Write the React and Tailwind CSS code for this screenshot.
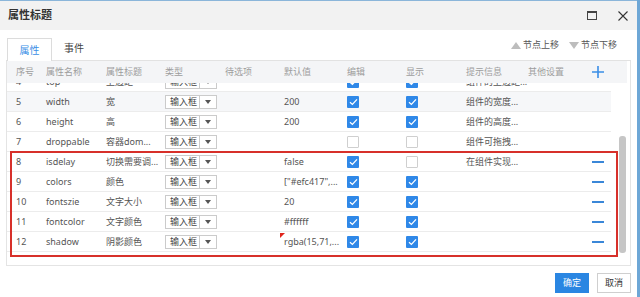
import React from 'react';

const FONT = { fontFamily: '"Noto Sans", "Noto Sans CJK SC", sans-serif' };

const COLS = 'grid grid-cols-[30px_60px_59px_60px_59px_63px_59px_60px_62px_64px_1fr] pl-[1px]';

const ROWS = [
  { no: 4, name: 'top', title: '上边距', def: '', edit: true, show: true, hint: '组件的上边距...' },
  { no: 5, name: 'width', title: '宽', def: '200', edit: true, show: true, hint: '组件的宽度...', shade: true },
  { no: 6, name: 'height', title: '高', def: '200', edit: true, show: true, hint: '组件的高度...' },
  { no: 7, name: 'droppable', title: '容器dom...', def: '', edit: false, show: false, hint: '组件可拖拽...' },
  { no: 8, name: 'isdelay', title: '切换需要调...', def: 'false', edit: true, show: false, hint: '在组件实现...', minus: true },
  { no: 9, name: 'colors', title: '颜色', def: '["#efc417",...', edit: true, show: true, hint: '', minus: true },
  { no: 10, name: 'fontszie', title: '文字大小', def: '20', edit: true, show: true, hint: '', minus: true },
  { no: 11, name: 'fontcolor', title: '文字颜色', def: '#ffffff', edit: true, show: true, hint: '', minus: true },
  { no: 12, name: 'shadow', title: '阴影颜色', def: 'rgba(15,71,...', edit: true, show: true, hint: '', minus: true, mark: true },
];

const Check = ({ on }) =>
  on ? (
    <span className="w-[12px] h-[12px] bg-[#2f88e8] rounded-[1px] flex items-center justify-center">
      <svg width="9" height="8" viewBox="0 0 9 8">
        <path d="M1 4.2 L3.4 6.4 L8 1.4" fill="none" stroke="#fff" strokeWidth="1.3" />
      </svg>
    </span>
  ) : (
    <span className="block w-[12px] h-[12px] bg-white border border-[#cfcfcf] rounded-[1px]" />
  );

const Select = () => (
  <div className="w-[52px] h-[14px] border border-[#cbcbcb] bg-white flex items-center text-[9px] text-[#444]">
    <span className="w-[33px] pl-[4px] leading-none">输入框</span>
    <span className="flex-1 h-full border-l border-[#cbcbcb] flex items-center justify-center">
      <svg width="6" height="4" viewBox="0 0 6 4">
        <path d="M0 0 H6 L3 4 Z" fill="#555" />
      </svg>
    </span>
  </div>
);

const Row = ({ r }) => (
  <div className={`${COLS} h-[20px] items-center border-b border-[#ececec] text-[9px] text-[#555] ${r.shade ? 'bg-[#f6f7f9]' : ''}`}>
    <span className="pl-2">{r.no}</span>
    <span className="pl-2">{r.name}</span>
    <span className="pl-2 whitespace-nowrap">{r.title}</span>
    <span className="pl-2"><Select /></span>
    <span className="pl-2" />
    <span className="pl-2 whitespace-nowrap relative h-full flex items-center">
      {r.mark && (
        <svg className="absolute left-[4px] top-[1px]" width="5" height="5" viewBox="0 0 5 5">
          <path d="M0 0 H5 L0 5 Z" fill="#e0241b" />
        </svg>
      )}
      {r.def}
    </span>
    <span className="pl-2"><Check on={r.edit} /></span>
    <span className="pl-2"><Check on={r.show} /></span>
    <span className="pl-2 whitespace-nowrap">{r.hint}</span>
    <span className="pl-2" />
    <span className="pl-2">
      {r.minus && <span className="block w-[12px] h-[2px] bg-[#3a87d8]" />}
    </span>
  </div>
);

export default function App() {
  return (
    <div className="relative w-[640px] h-[297px] flex overflow-hidden bg-white" style={FONT}>
      <div className="w-[637px] flex flex-col border-t border-[#8bb6da]">
        <div className="h-[29px] bg-[#f2f2f2] flex items-center justify-between pl-[8px] pr-[9px]">
          <span className="text-[11px] font-semibold text-[#333]">属性标题</span>
          <div className="flex items-center gap-[21px]">
            <span className="w-[10px] h-[9px] border border-[#444] border-t-2" />
            <svg width="10" height="10" viewBox="0 0 10 10">
              <path d="M0.5 0.5 L9.5 9.5 M9.5 0.5 L0.5 9.5" stroke="#333" strokeWidth="1.1" />
            </svg>
          </div>
        </div>

        <div className="flex-1 flex flex-col pl-[6px]">
          <div className="w-[625px] h-[31px] flex justify-between border-b border-[#e2e2e2]">
            <div className="flex items-end pl-[1px] gap-[12px]">
              <div className="w-[45px] h-[23px] -mb-px bg-white border border-b-0 border-[#dcdcdc] flex items-center justify-center text-[10px] text-[#3a8ee6]">
                属性
              </div>
              <div className="h-[23px] flex items-center text-[10px] text-[#444]">事件</div>
            </div>
            <div className="flex items-center gap-[10px] pr-[14px] text-[9px] text-[#555]">
              <span className="flex items-center gap-[2px]">
                <svg width="10" height="7" viewBox="0 0 10 7"><path d="M5 0 L10 7 H0 Z" fill="#bdbdbd" /></svg>
                节点上移
              </span>
              <span className="flex items-center gap-[2px]">
                <svg width="10" height="7" viewBox="0 0 10 7"><path d="M0 0 H10 L5 7 Z" fill="#bdbdbd" /></svg>
                节点下移
              </span>
            </div>
          </div>

          <div className="w-[625px] h-[205px] border-l border-r border-b border-[#e4e4e4] flex flex-col">
            <div className={`${COLS} h-[22px] mr-[3px] items-center bg-[#f4f5f7] text-[9px] text-[#9d9d9d]`}>
              <span className="pl-2">序号</span>
              <span className="pl-2">属性名称</span>
              <span className="pl-2">属性标题</span>
              <span className="pl-2">类型</span>
              <span className="pl-2">待选项</span>
              <span className="pl-2">默认值</span>
              <span className="pl-2">编辑</span>
              <span className="pl-2">显示</span>
              <span className="pl-2">提示信息</span>
              <span className="pl-2">其他设置</span>
              <span className="pl-2">
                <svg width="12" height="12" viewBox="0 0 12 12">
                  <path d="M6 0 V12 M0 6 H12" stroke="#3a8ee6" strokeWidth="1.6" />
                </svg>
              </span>
            </div>
            <div className="flex h-[172px]">
              <div className="w-[604px] overflow-hidden">
                <div className="-mt-[11px]">
                  {ROWS.map((r) => (
                    <Row key={r.no} r={r} />
                  ))}
                </div>
              </div>
              <div className="w-[8px] ml-[8px] pt-[53px]">
                <div className="w-[7px] h-[117px] rounded-[3px] bg-[#c6c6c6]" />
              </div>
            </div>
          </div>

          <div className="w-[625px] flex justify-end gap-[8px] pt-[7px]">
            <button className="w-[34px] h-[20px] bg-[#2a86e2] text-white text-[9px]">确定</button>
            <button className="w-[34px] h-[20px] bg-white border border-[#cfcfcf] text-[#333] text-[9px]">取消</button>
          </div>
        </div>
      </div>
      <div className="flex-1 bg-[#6ea7d6]" />

      <div className="absolute left-[10px] top-[151px] w-[608px] h-[106px] border-2 border-[#d7302a] pointer-events-none" />
    </div>
  );
}
